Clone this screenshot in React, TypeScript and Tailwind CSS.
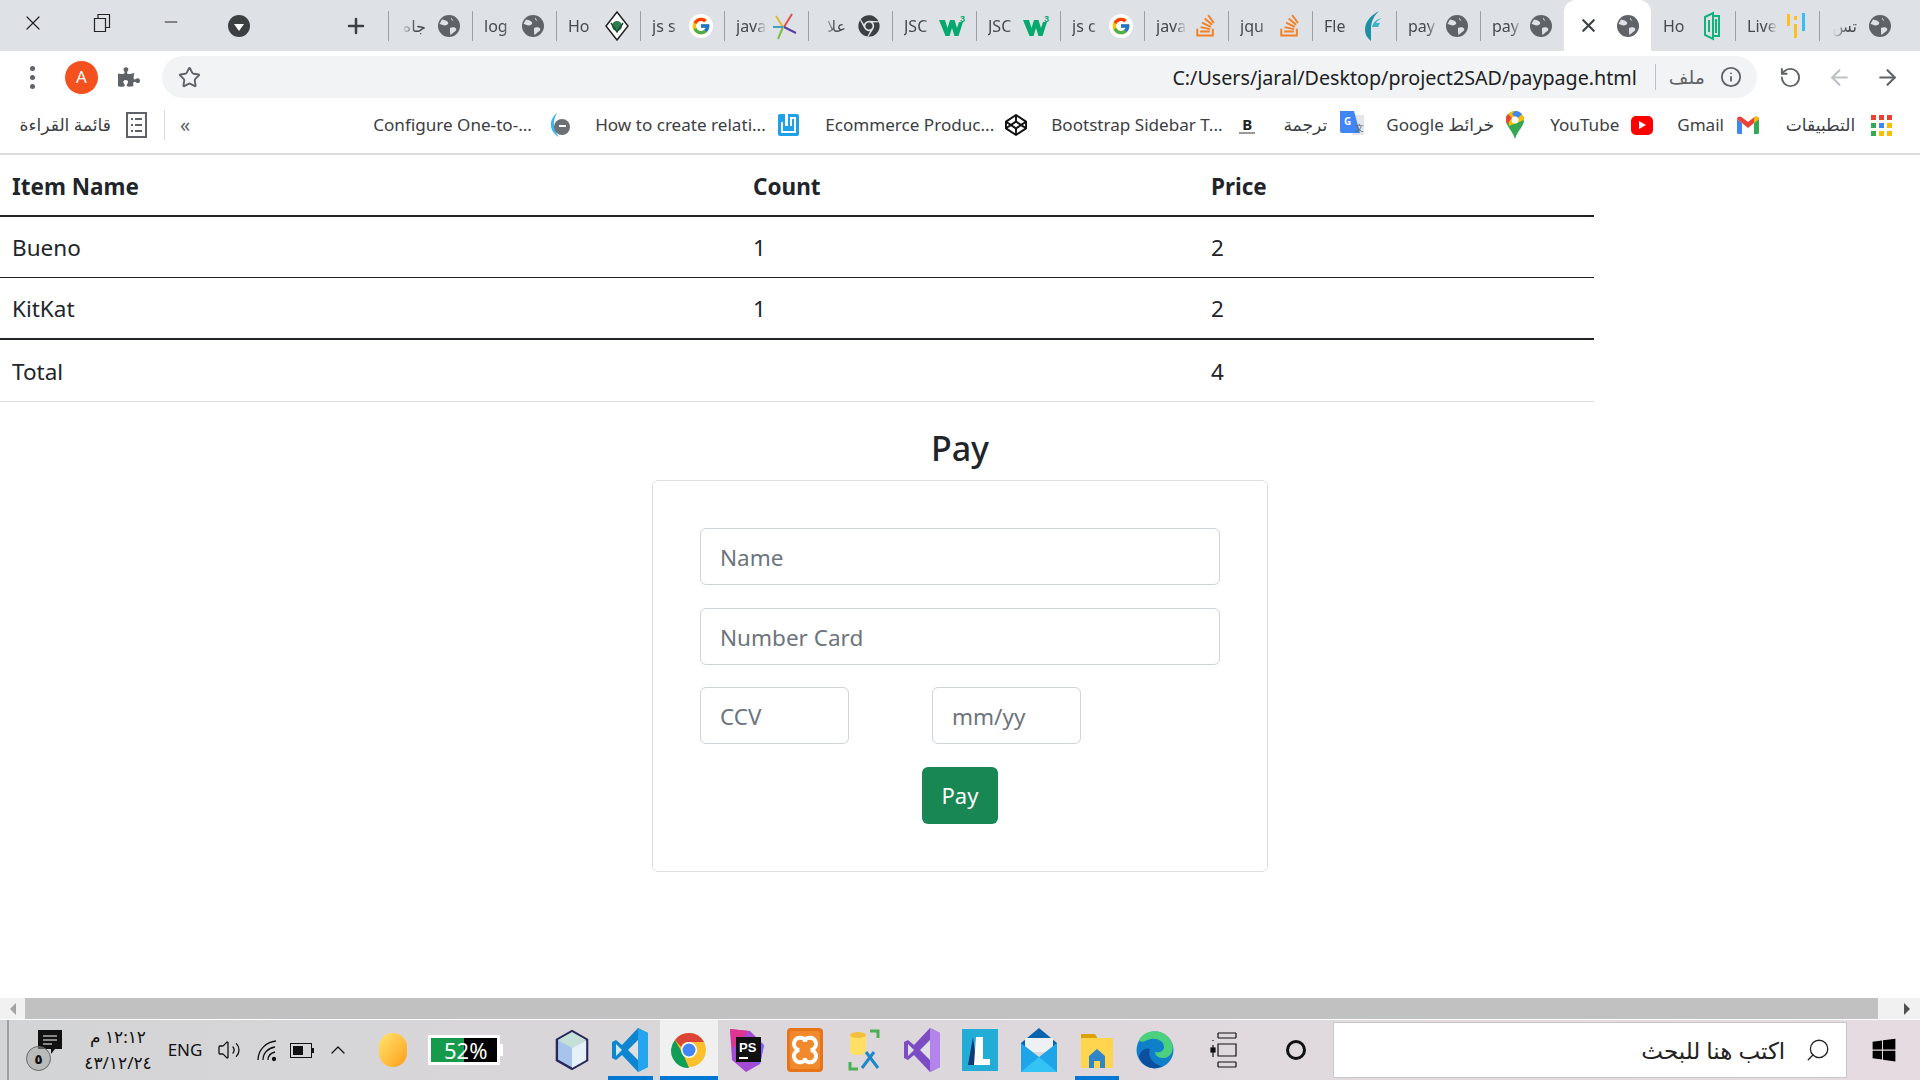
import { ArrowLeft, ArrowRight, ChevronUp, Info, Minus, Plus, RotateCcw, Search, Star, Volume2, X } from 'lucide-react'
import { ReactNode } from 'react'
import { FaChrome, FaCodepen, FaPuzzlePiece, FaStackOverflow, FaWindows } from 'react-icons/fa'
import { FcGoogle } from 'react-icons/fc'

const Globe = () => (
  <svg width="22" height="22" viewBox="0 0 22 22">
    <circle cx="11" cy="11" r="11" fill="#5f6368" />
    <path d="M4 4.500c3 .5 5 1 6 3s-2 3-3.500 3S3 9 1.500 9M13 2.500c-.5 2 1 3 2.500 3.500M12 13c2-1 5-1 6 .5s-1 3-2.500 4-2 2-3 2.500c-.5-2-.5-4-.5-7z" fill="#dee1e6" />
  </svg>
)

const GoogleIcon = () => (
  <span className="flex h-[24px] w-[24px] items-center justify-center rounded-full bg-white">
    <FcGoogle size={20} />
  </span>
)

const W3 = () => (
  <svg width="28" height="24" viewBox="0 0 28 24">
    <path d="M0 6h6l2.500 8L11 6h4.500l2.500 8 2-6h4l-4.500 14h-4L13 14l-2.500 8h-4z" fill="#04aa6d" />
    <text x="21" y="8" fontSize="9" fontWeight="700" fill="#04aa6d" fontFamily="Liberation Sans">3</text>
  </svg>
)

const Diamond = () => (
  <svg width="24" height="30" viewBox="0 0 24 30">
    <path d="M12 1l11 14-11 14L1 15z" fill="#fff" stroke="#222" strokeWidth="1.500" />
    <circle cx="12" cy="15" r="5" fill="#2e7d4f" />
    <path d="M6 12l6 9 6-9" fill="none" stroke="#1b4d31" strokeWidth="1.500" />
  </svg>
)

const Spark = () => (
  <svg width="26" height="28" viewBox="0 0 26 28">
    <path d="M11 15L4 4" stroke="#e0b83a" strokeWidth="2" />
    <path d="M12 15l8-13" stroke="#e0524a" strokeWidth="2" />
    <path d="M12 15l12 6" stroke="#5a3fa0" strokeWidth="2" />
    <path d="M11 15L6 27" stroke="#7fbf3f" strokeWidth="2" />
    <path d="M11 15H1" stroke="#3fa0c0" strokeWidth="2" />
  </svg>
)

const FlexIcon = () => (
  <svg width="20" height="30" viewBox="0 0 20 30">
    <path d="M16 0C7 5 2 11 2 19c0 4 2 8 6 11V18C8 10 11 5 16 0z" fill="#1d8ea3" />
    <path d="M19 7c-5 1-9 4-10 9h6l2-4h-4c1-2 4-4 6-5z" fill="#3ab3c7" />
  </svg>
)

const HowIcon = () => (
  <svg width="16" height="30" viewBox="0 0 16 30" fill="none" stroke="#11b27c" strokeWidth="2">
    <path d="M1 6l8-4v26l-8-4zM9 5h6v20H9M5 9v12M12 8v14" />
  </svg>
)

const LiveIcon = () => (
  <svg width="18" height="28" viewBox="0 0 18 28">
    <rect x="0" y="2" width="3" height="12" fill="#fbbf24" />
    <rect x="7" y="12" width="3" height="14" fill="#fbbf24" />
    <rect x="7" y="4" width="3" height="4" fill="#fbbf24" />
    <rect x="15" y="1" width="3" height="18" fill="#38bdf8" />
  </svg>
)

type Tab = { label: string; icon: ReactNode; rtl?: boolean; active?: boolean }

const so = <FaStackOverflow size={25} color="#f48024" />
const tabs: Tab[] = [
  { label: 'جاه', icon: <Globe />, rtl: true },
  { label: 'log', icon: <Globe /> },
  { label: 'Ho', icon: <Diamond /> },
  { label: 'js s', icon: <GoogleIcon /> },
  { label: 'java', icon: <Spark /> },
  { label: 'علا', icon: <FaChrome size={22} color="#3c4043" />, rtl: true },
  { label: 'JSC', icon: <W3 /> },
  { label: 'JSC', icon: <W3 /> },
  { label: 'js c', icon: <GoogleIcon /> },
  { label: 'java', icon: so },
  { label: 'jqu', icon: so },
  { label: 'Fle', icon: <FlexIcon /> },
  { label: 'pay', icon: <Globe /> },
  { label: 'pay', icon: <Globe /> },
  { label: '', icon: <Globe />, active: true },
  { label: 'Ho', icon: <HowIcon /> },
  { label: 'Live', icon: <LiveIcon /> },
  { label: 'تس', icon: <Globe />, rtl: true },
]

function TabItem({ tab, hideSep }: { tab: Tab; hideSep: boolean }) {
  if (tab.active) {
    return (
      <div className="z-10 flex h-[51px] w-[87px] items-center justify-between rounded-t-[12px] bg-white pr-[12px] pl-[14px]">
        <X size={21} strokeWidth={2.500} className="text-[#3c4043]" />
        {tab.icon}
      </div>
    )
  }
  return (
    <div className="flex h-[51px] w-[84px] items-center">
      <div className={hideSep ? 'h-[30px] w-px' : 'h-[30px] w-px bg-[#9aa0a6]'} />
      <span
        dir={tab.rtl ? 'rtl' : 'ltr'}
        className={
          tab.rtl
            ? 'ml-[11px] w-[32px] pr-[6px] text-[16px] whitespace-nowrap text-[#45494e] [mask-image:linear-gradient(to_left,black_50%,transparent_95%)]'
            : 'ml-[11px] w-[32px] text-[16px] whitespace-nowrap text-[#45494e] [mask-image:linear-gradient(to_right,black_60%,transparent_95%)]'
        }
      >
        {tab.label}
      </span>
      <div className="flex w-[34px] items-center justify-center">{tab.icon}</div>
    </div>
  )
}

function TabStrip() {
  return (
    <div className="flex h-[51px] shrink-0 items-center bg-[#dee1e6]">
      <X size={24} strokeWidth={1.200} className="mb-[5px] ml-[21px] text-[#222]" />
      <svg width="18" height="20" viewBox="0 0 18 20" className="mb-[5px] ml-[48px]" fill="none" stroke="#222" strokeWidth="1.200">
        <path d="M1.500 5.500h11v13h-11zM5 5.500V1.500h11.500v13h-4" />
      </svg>
      <Minus size={20} strokeWidth={1.200} className="mb-[8px] ml-[50px] text-[#222]" />
      <div className="ml-[47px] flex h-[22px] w-[22px] items-center justify-center rounded-full bg-[#3c4043]">
        <div className="mt-[3px] h-0 w-0 border-x-[5px] border-t-[7px] border-x-transparent border-t-white" />
      </div>
      <Plus size={24} strokeWidth={2.500} className="ml-[94px] text-[#3c4043]" />
      <div className="ml-[20px] flex">
        {tabs.map((tab, i) => (
          <TabItem key={i} tab={tab} hideSep={i > 0 && Boolean(tabs[i - 1].active)} />
        ))}
      </div>
    </div>
  )
}

function Toolbar() {
  return (
    <div className="flex h-[52px] shrink-0 items-center bg-white">
      <div className="ml-[30px] flex flex-col gap-[4px]">
        <span className="h-[5px] w-[5px] rounded-full bg-[#5f6368]" />
        <span className="h-[5px] w-[5px] rounded-full bg-[#5f6368]" />
        <span className="h-[5px] w-[5px] rounded-full bg-[#5f6368]" />
      </div>
      <div className="ml-[30px] flex h-[33px] w-[33px] items-center justify-center rounded-full bg-[#f4511e] text-[17px] text-white">A</div>
      <FaPuzzlePiece size={22} color="#5f6368" className="ml-[20px]" />
      <div className="ml-[22px] flex h-[42px] w-[1595px] items-center rounded-full bg-[#f1f3f4]">
        <Star size={23} strokeWidth={2} className="ml-[16px] text-[#5f6368]" />
        <span className="ml-auto pt-[2px] text-[19.700px] text-[#202124]">C:/Users/jaral/Desktop/project2SAD/paypage.html</span>
        <div className="mr-[13px] ml-[18px] h-[26px] w-px bg-[#bdc1c6]" />
        <span dir="rtl" className="text-[19px] text-[#5f6368]">ملف</span>
        <Info size={22} className="mr-[15px] ml-[15px] text-[#5f6368]" />
      </div>
      <RotateCcw size={23} className="ml-[22px] text-[#5f6368]" />
      <ArrowLeft size={25} className="ml-[25px] text-[#bdc1c6]" />
      <ArrowRight size={25} className="ml-[23px] text-[#5f6368]" />
    </div>
  )
}

function MapsPin() {
  return (
    <svg width="18" height="28" viewBox="0 0 18 28">
      <path d="M9 0a9 9 0 0 1 9 9c0 6-6 10-9 19-3-9-9-13-9-19a9 9 0 0 1 9-9z" fill="#34a853" />
      <path d="M9 0a9 9 0 0 1 9 9L3 15 2 4a9 9 0 0 1 7-4z" fill="#fbbc04" />
      <path d="M9 0a9 9 0 0 1 7 3l-5 5-5-5z" fill="#4285f4" />
      <path d="M2 3l4 4-5 6C-1 9 0 5 2 3z" fill="#ea4335" />
      <circle cx="9" cy="9" r="3.500" fill="#fff" />
    </svg>
  )
}

function GmailIcon() {
  return (
    <svg width="22" height="18" viewBox="0 0 22 18">
      <path d="M0 3l5 4v11H1.500A1.500 1.500 0 0 1 0 16.500z" fill="#4285f4" />
      <path d="M22 3l-5 4v11h3.500a1.500 1.500 0 0 0 1.500-1.500z" fill="#34a853" />
      <path d="M0 3c0-2 2.500-3.500 4.500-2L11 6l6.500-5C19.500-.5 22 1 22 3l-5 4-6 5-6-5z" fill="#ea4335" />
      <path d="M17 1.500c2-1.700 5-.5 5 1.500l-5 4z" fill="#fbbc04" />
    </svg>
  )
}

function AppsGrid() {
  const colors = ['#ea4335', '#ea4335', '#ea4335', '#34a853', '#4285f4', '#fbbc04', '#34a853', '#fbbc04', '#fbbc04']
  return (
    <div className="grid w-[21px] grid-cols-3 gap-[3px]">
      {colors.map((c, i) => (
        <span key={i} className="h-[5px] w-[5px]" style={{ backgroundColor: c }} />
      ))}
    </div>
  )
}

function Bookmarks() {
  const text = 'whitespace-nowrap text-[17.100px] text-[#3c4043]'
  return (
    <div className="flex h-[52px] shrink-0 items-center border-b-2 border-[#dadce0] bg-white pb-[6px]">
      <span dir="rtl" className={`ml-[21px] w-[90px] ${text}`}>قائمة القراءة</span>
      <svg width="21" height="26" viewBox="0 0 21 26" className="ml-[15px]" fill="none" stroke="#5f6368" strokeWidth="2">
        <rect x="1" y="1" width="19" height="24" />
        <path d="M5 7h2M9 7h7M5 13h2M9 13h7M5 19h2M9 19h7" />
      </svg>
      <div className="ml-[17px] h-[30px] w-px bg-[#dadce0]" />
      <span className="ml-[15px] text-[20px] leading-none text-[#5f6368]">«</span>
      <span className={`ml-[183px] w-[162px] ${text}`}>Configure One-to-...</span>
      <svg width="24" height="26" viewBox="0 0 24 26" className="ml-[12px]">
        <path d="M10 1C3 6 0 18 12 25 5 16 6 8 10 1z" fill="#3db4f2" />
        <circle cx="15" cy="15" r="8" fill="#6b7075" />
        <path d="M12 13h7v2h-7z" fill="#fff" />
      </svg>
      <span className={`ml-[24px] w-[170px] ${text}`}>How to create relati...</span>
      <svg width="21" height="22" viewBox="0 0 21 22" className="ml-[13px]">
        <rect width="21" height="22" rx="2" fill="#1da1e8" />
        <path d="M7 0h3v12H7z" fill="#fff" />
        <path d="M4 8v10h13V4h-4v8" fill="none" stroke="#fff" strokeWidth="2" />
      </svg>
      <span className={`ml-[26px] w-[166px] ${text}`}>Ecommerce Produc...</span>
      <FaCodepen size={22} color="#111" className="ml-[14px]" />
      <span className={`ml-[24px] w-[172px] ${text}`}>Bootstrap Sidebar T...</span>
      <span className="ml-[16px] w-[16px] border-b-2 border-[#999] text-center text-[15px] leading-[16px] font-bold text-[#222]">B</span>
      <span dir="rtl" className={`ml-[28px] w-[44px] ${text}`}>ترجمة</span>
      <svg width="24" height="28" viewBox="0 0 24 28" className="ml-[13px]">
        <path d="M8 4h16v20H12z" fill="#e4e6e8" />
        <path d="M0 0h14l6 22H2a2 2 0 0 1-2-2z" fill="#4285f4" />
        <text x="4" y="14" fontSize="10" fontWeight="700" fill="#fff">G</text>
        <text x="15" y="20" fontSize="9" fill="#5f6368">文</text>
      </svg>
      <span className={`ml-[22px] w-[106px] ${text}`}>Google خرائط</span>
      <div className="ml-[14px] flex w-[18px]"><MapsPin /></div>
      <span className={`ml-[26px] w-[70px] ${text}`}>YouTube</span>
      <div className="ml-[11px] flex h-[19px] w-[22px] items-center justify-center rounded-[5px] bg-[#f00]">
        <div className="h-0 w-0 border-y-[4px] border-l-[7px] border-y-transparent border-l-white" />
      </div>
      <span className={`ml-[24px] w-[46px] ${text}`}>Gmail</span>
      <div className="ml-[14px] flex"><GmailIcon /></div>
      <span dir="rtl" className={`ml-[21px] w-[75px] ${text}`}>التطبيقات</span>
      <div className="ml-[16px]"><AppsGrid /></div>
    </div>
  )
}

function ItemsTable() {
  return (
    <table className="w-[1594px] table-fixed border-collapse text-[22.500px] text-[#212529]">
      <thead>
        <tr className="h-[61px] border-b-2 border-[#212529]">
          <th className="w-[741px] px-[12px] pt-[3px] text-left font-bold">Item Name</th>
          <th className="w-[458px] px-[12px] pt-[3px] text-left font-bold">Count</th>
          <th className="px-[12px] pt-[3px] text-left font-bold">Price</th>
        </tr>
      </thead>
      <tbody>
        <tr className="h-[61px] border-b border-[#212529]">
          <td className="px-[12px] pt-[3px]">Bueno</td>
          <td className="px-[12px] pt-[3px]">1</td>
          <td className="px-[12px] pt-[3px]">2</td>
        </tr>
        <tr className="h-[62px] border-b-2 border-[#212529]">
          <td className="px-[12px] pt-[3px]">KitKat</td>
          <td className="px-[12px] pt-[3px]">1</td>
          <td className="px-[12px] pt-[3px]">2</td>
        </tr>
        <tr className="h-[62px] border-b border-[#dee2e6]">
          <td className="px-[12px] pt-[3px]">Total</td>
          <td className="px-[12px] pt-[3px]"></td>
          <td className="px-[12px] pt-[3px]">4</td>
        </tr>
      </tbody>
    </table>
  )
}

function PayForm() {
  const input =
    'h-[57px] rounded-[6px] border border-[#ced4da] bg-white px-[19px] pt-[2px] text-[22.500px] text-[#212529] placeholder:text-[#6c757d] outline-none'
  return (
    <div className="flex flex-col items-center">
      <h2 className="mt-[21px] h-[57px] text-center text-[34px] leading-[50px] font-medium text-[#212529]">Pay</h2>
      <form className="flex h-[392px] w-[616px] flex-col items-center rounded-[6px] border border-[rgba(0,0,0,0.125)] px-[47px] pt-[47px]">
        <input className={`w-[520px] ${input}`} placeholder="Name" />
        <input className={`mt-[23px] w-[520px] ${input}`} placeholder="Number Card" />
        <div className="mt-[22px] flex w-[520px] gap-[83px]">
          <input className={`w-[149px] ${input}`} placeholder="CCV" />
          <input className={`w-[149px] ${input}`} placeholder="mm/yy" />
        </div>
        <button type="button" className="mt-[23px] h-[57px] w-[76px] rounded-[6px] bg-[#198754] text-[22px] text-white">
          Pay
        </button>
      </form>
    </div>
  )
}

function ScrollBar() {
  return (
    <div className="flex h-[21px] shrink-0 bg-[#f1f1f1]">
      <div className="flex w-[25px] items-center justify-center">
        <div className="h-0 w-0 border-y-[6px] border-r-[6px] border-y-transparent border-r-[#a3a3a3]" />
      </div>
      <div className="w-[1853px] bg-[#c1c1c1]" />
      <div className="flex flex-1 items-center justify-end pr-[10px]">
        <div className="h-0 w-0 border-y-[6px] border-l-[6px] border-y-transparent border-l-[#505050]" />
      </div>
    </div>
  )
}

const appIcons: { icon: ReactNode; running?: boolean; active?: boolean }[] = [
  {
    icon: (
      <svg width="34" height="42" viewBox="0 0 36 42">
        <path d="M18 1l16 9v22l-16 9-16-9V10z" fill="#a9c4ea" stroke="#28285c" strokeWidth="2.500" />
        <path d="M18 2l15 8.500-15 8.500-15-8.500z" fill="#c4e0d8" />
        <path d="M18 19v21l15-8.500V11z" fill="#e6f0f8" />
      </svg>
    ),
  },
  {
    icon: (
      <svg width="36" height="44" viewBox="0 0 36 44">
        <path d="M26 0l10 5v34l-10 5L10 27l-6 5-4-2V14l4-2 6 5z" fill="#0e85d0" />
        <path d="M26 0l10 5v34l-10 5z" fill="#24a5ee" />
        <path d="M4 16v12l6-6z" fill="#fff" fillOpacity="0.800" />
        <path d="M26 12l-10 10 10 10z" fill="#e0e0e2" />
      </svg>
    ),
    running: true,
  },
  {
    icon: (
      <svg width="36" height="44" viewBox="0 0 36 36">
        <circle cx="18" cy="18" r="17" fill="#fbc02d" />
        <path d="M18 1a17 17 0 0 1 15 9H18a8 8 0 0 0-8 5L4 8A17 17 0 0 1 18 1z" fill="#db4437" />
        <path d="M4 8l8 14 6 13.900A17 17 0 0 1 4 8z" fill="#0f9d58" />
        <circle cx="18" cy="18" r="8" fill="#fff" />
        <circle cx="18" cy="18" r="6.500" fill="#4285f4" />
      </svg>
    ),
    running: true,
    active: true,
  },
  {
    icon: (
      <svg width="36" height="44" viewBox="0 0 36 44">
        <path d="M1 1l20 2 14 14-4 19-14 8L3 32z" fill="#a34ad6" />
        <path d="M1 1l18 2-8 12L3 20z" fill="#e0358f" />
        <path d="M35 17l-4 19-8-2 4-20z" fill="#7b61ff" />
        <rect x="7" y="9" width="25" height="25" fill="#111" />
        <text x="10" y="24" fontSize="13" fontWeight="700" fill="#fff" fontFamily="Liberation Sans">PS</text>
        <rect x="10" y="29" width="9" height="2" fill="#fff" />
      </svg>
    ),
  },
  {
    icon: (
      <svg width="36" height="44" viewBox="0 0 36 44">
        <rect x="0" y="0" width="36" height="44" rx="4" fill="#e8741a" />
        <rect x="3" y="3" width="30" height="38" rx="2" fill="#f08a2c" />
        <path d="M15 10c-9-2-11 10-3 12-8 2-6 14 3 12 2 0 3-2 3-4 0 2 1 4 3 4 9 2 11-10 3-12 8-2 6-14-3-12-2 0-3 2-3 4 0-2-1-4-3-4z" fill="none" stroke="#fff" strokeWidth="4" />
      </svg>
    ),
  },
  {
    icon: (
      <svg width="34" height="44" viewBox="0 0 34 44" fill="none">
        <path d="M3 34v7h8M31 10V3h-8" stroke="#4caf50" strokeWidth="3" />
        <path d="M3 8c0-5 16-5 16 0v16c0 4-16 4-16 0z" fill="#ffdf66" />
        <ellipse cx="11" cy="7" rx="8" ry="3" fill="#f0c040" />
        <path d="M15 40l12-16M31 40L19 24" stroke="#1e88c9" strokeWidth="3" />
      </svg>
    ),
  },
  {
    icon: (
      <svg width="36" height="44" viewBox="0 0 36 44">
        <path d="M26 0l10 5v34l-10 5L10 27l-6 5-4-2V14l4-2 6 5z" fill="#7d4cc4" />
        <path d="M26 0l10 5v34l-10 5z" fill="#b384ec" />
        <path d="M4 16v12l6-6zM26 12l-10 10 10 10z" fill="#e0dfe3" />
      </svg>
    ),
  },
  {
    icon: (
      <svg width="36" height="42" viewBox="0 0 36 42">
        <rect width="36" height="42" fill="#22acd6" />
        <path d="M11 8l-5 28h16v-5H14z" fill="#123a78" />
        <path d="M14 8h7v22h7v6H12z" fill="#fff" />
      </svg>
    ),
  },
  {
    icon: (
      <svg width="36" height="44" viewBox="0 0 36 44">
        <path d="M18 0l18 15v3H0v-3z" fill="#0a64ad" />
        <path d="M4 10h28v14H4z" fill="#eef1f4" />
        <path d="M0 15l18 14 18-14v29H0z" fill="#1ea4e8" />
        <path d="M0 44l18-15 18 15z" fill="#33c4f5" />
      </svg>
    ),
  },
  {
    icon: (
      <svg width="32" height="36" viewBox="0 0 32 36">
        <path d="M0 2h14l3 5H0z" fill="#dca000" />
        <rect y="6" width="32" height="30" rx="1" fill="#ffd54f" />
        <path d="M8 24l8-7 8 7v12h-5v-7h-6v7H8z" fill="#2e86c8" />
      </svg>
    ),
    running: true,
  },
  {
    icon: (
      <svg width="38" height="44" viewBox="0 0 38 38">
        <circle cx="19" cy="19" r="18.500" fill="#0f7fc9" />
        <path d="M3 9C9-3 30-3 36 12c3 9-3 15-9 15-5 0-8-3-8-6 5 1 9-1 9-5 0-6-7-9-13-8C10 9 6 13 3 9z" fill="#4bd07f" />
        <path d="M14 18c-3 8 4 16 12 17-8 5-20 1-23-9 1-6 6-10 11-8z" fill="#0b4f9e" />
      </svg>
    ),
  },
]

function Taskbar() {
  return (
    <div className="mt-px flex h-[60px] flex-1 items-center bg-gradient-to-r from-[#d3d4d5] to-[#e6dbe1] text-[#111]">
      <div className="h-full w-[9px] border-r-2 border-[#a0a0a0]" />
      <div className="relative ml-[17px] h-[44px] w-[44px]">
        <svg width="24" height="24" viewBox="0 0 24 24" className="absolute top-[2px] left-[12px]">
          <path d="M0 0h24v19h-7l-4 5v-5H0z" fill="#111" />
          <path d="M5 6h14M5 10h14M5 14h9" stroke="#fff" strokeWidth="1" />
        </svg>
        <span className="absolute top-[18px] left-0 flex h-[25px] w-[25px] items-center justify-center rounded-full border border-[#666] bg-[rgba(160,160,160,0.500)] text-[14px] font-bold">٥</span>
      </div>
      <div className="ml-[13px] flex w-[70px] flex-col items-center text-[17px] leading-[26px]">
        <span dir="rtl">١٢:١٢ م</span>
        <span>٤٣/١٢/٢٤</span>
      </div>
      <span className="ml-[12px] w-[40px] text-center text-[17px]">ENG</span>
      <Volume2 size={24} strokeWidth={1.300} className="ml-[12px]" />
      <svg width="28" height="24" viewBox="0 0 24 24" className="ml-[13px]" fill="none" stroke="#111" strokeWidth="1.300">
        <path d="M2 22C2 12 10 4 20 3M7 22c0-7 5-12 12-13M12 22c0-4 3-7 7-8" />
        <circle cx="18" cy="21" r="1.500" fill="#111" />
      </svg>
      <div className="ml-[6px] flex h-[16px] w-[28px] items-center justify-center">
        <div className="flex h-[15px] w-[22px] items-center border border-[#111] p-[2px]">
          <div className="h-full w-[10px] bg-[#111]" />
        </div>
        <div className="h-[5px] w-[2px] bg-[#111]" />
      </div>
      <ChevronUp size={24} strokeWidth={1.300} className="ml-[10px]" />
      <div className="ml-[29px] h-[34px] w-[28px] rounded-full bg-gradient-to-br from-[#ffe56b] to-[#ff9d00]" />
      <div className="ml-[21px] flex items-center">
        <div className="flex h-[30px] w-[72px] overflow-hidden border-[3px] border-white text-[22px] leading-[24px] text-white">
          <div className="relative w-[33px] bg-[#169b4c]">
            <span className="absolute top-0 left-[13px]">52%</span>
          </div>
          <div className="flex-1 bg-black" />
        </div>
        <div className="h-[12px] w-[3px] bg-white" />
      </div>
      <div className="ml-[40px] flex">
        {appIcons.map((app, i) => (
          <div
            key={i}
            className={
              app.active
                ? 'relative flex h-[60px] w-[58.300px] items-center justify-center bg-[#f0f0f0]'
                : 'relative flex h-[60px] w-[58.300px] items-center justify-center'
            }
          >
            {app.icon}
            {app.running && (
              <span className={app.active ? 'absolute inset-x-0 bottom-0 h-[4px] bg-[#0078d4]' : 'absolute inset-x-[7px] bottom-0 h-[4px] bg-[#0078d4]'} />
            )}
          </div>
        ))}
      </div>
      <svg width="30" height="36" viewBox="0 0 30 36" className="ml-[26px]" fill="none" stroke="#111" strokeWidth="1.200">
        <path d="M8 1h18M8 6h18M8 12h18v12H8zM8 30h18M8 35h18M8 1v5M26 1v5M8 30v5M26 30v5M3 8v1M3 13v12" />
        <rect x="1" y="16" width="4" height="4" fill="#111" />
      </svg>
      <div className="ml-[46px] h-[20px] w-[20px] rounded-full border-[3px] border-[#111]" />
      <div className="ml-[27px] flex h-[56px] w-[514px] items-center justify-end border border-[#c8c8c8] bg-white pr-[15px]">
        <span dir="rtl" className="text-[23px] text-[#222]">اكتب هنا للبحث</span>
        <Search size={26} strokeWidth={1.200} className="ml-[20px] -scale-x-100 text-[#222]" />
      </div>
      <div className="flex flex-1 justify-center">
        <FaWindows size={26} color="#000" />
      </div>
    </div>
  )
}

export default function App() {
  return (
    <div className="flex h-[1080px] w-[1920px] flex-col overflow-hidden bg-white font-['Noto_Sans','DejaVu_Sans',sans-serif]">
      <TabStrip />
      <Toolbar />
      <Bookmarks />
      <main className="h-[843px] shrink-0">
        <ItemsTable />
        <PayForm />
      </main>
      <ScrollBar />
      <Taskbar />
    </div>
  )
}
